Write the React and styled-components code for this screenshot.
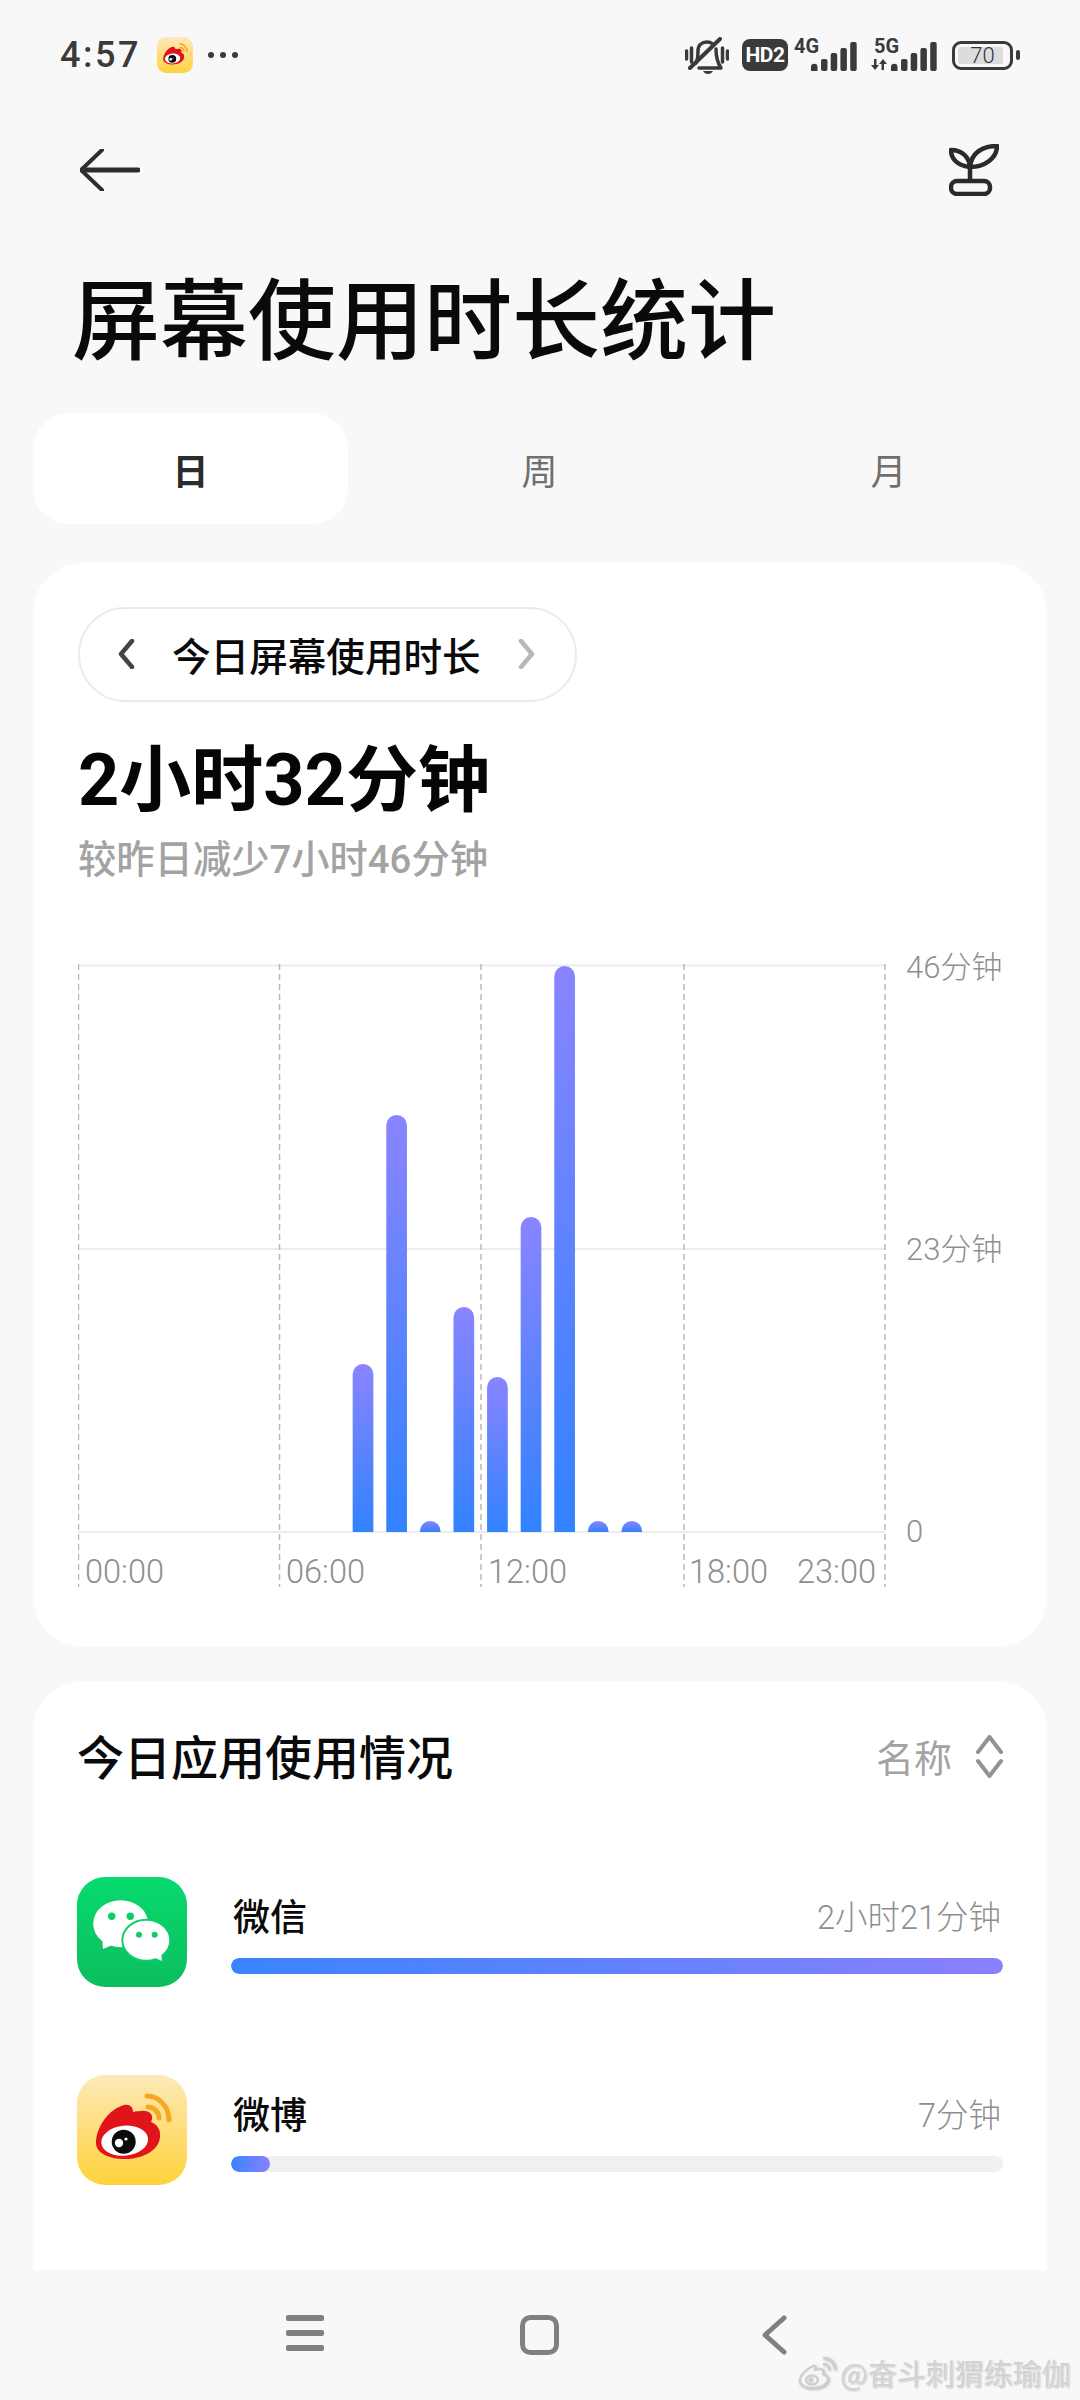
import React from "react";
import styled, { createGlobalStyle } from "styled-components";

const FONT = `Roboto, "Noto Sans CJK SC", sans-serif`;
const CJK = `"Noto Sans CJK SC", sans-serif`;
const GREY = "#a3a3a3";

const GlobalStyle = createGlobalStyle`
    html, body {
        margin: 0;
        padding: 0;
        background: #f8f8f8;
    }
    * {
        box-sizing: border-box;
    }
`;

const Page = styled.div`
    position: relative;
    width: 1080px;
    height: 2400px;
    overflow: hidden;
    display: flex;
    flex-direction: column;
    background: #f8f8f8;
    font-family: ${FONT};
`;

const StatusBar = styled.div`
    height: 110px;
    padding: 0 60px;
    display: flex;
    align-items: center;
    justify-content: space-between;
    color: #3a3a3a;
`;

const StatusLeft = styled.div`
    display: flex;
    align-items: center;
`;

const Clock = styled.span`
    font-size: 36px;
    font-weight: 500;
    letter-spacing: 2.5px;
    width: 97px;
`;

const Dots = styled.div`
    display: flex;
    gap: 6px;
    margin-left: 15px;
`;

const Dot = styled.i`
    width: 6px;
    height: 6px;
    border-radius: 50%;
    background: #3a3a3a;
`;

const StatusRight = styled.div`
    display: flex;
    align-items: center;
`;

const HdBadge = styled.div`
    width: 46px;
    height: 32px;
    margin: 0 6px 0 13px;
    border-radius: 8px;
    background: #3a3a3a;
    color: #fff;
    font-size: 21px;
    font-weight: 700;
    letter-spacing: -0.5px;
    display: flex;
    align-items: center;
    justify-content: center;
`;

const SignalGroup = styled.div`
    position: relative;
    width: ${(p) => p.$width}px;
    height: 32px;
    margin-right: ${(p) => p.$gap}px;
    display: flex;
    justify-content: flex-end;
    align-items: flex-end;
`;

const NetLabel = styled.span`
    position: absolute;
    left: ${(p) => p.$left}px;
    top: -3px;
    font-size: 20px;
    font-weight: 700;
    line-height: 20px;
`;

const DataArrows = styled.svg`
    position: absolute;
    left: 0;
    bottom: 1px;
`;

const Battery = styled.div`
    display: flex;
    align-items: center;
    gap: 3px;
`;

const BatteryBody = styled.div`
    position: relative;
    width: 61px;
    height: 29px;
    border: 3.5px solid #3a3a3a;
    border-radius: 9px;
    display: flex;
    align-items: center;
    justify-content: center;
    font-size: 22px;
    font-weight: 300;
    color: #333;

    &::before {
        content: "";
        position: absolute;
        left: 2.5px;
        top: 3px;
        bottom: 3px;
        width: 45px;
        background: #dcdcdc;
        border-radius: 2px;
    }

    span {
        position: relative;
    }
`;

const BatteryNub = styled.i`
    width: 4px;
    height: 10px;
    border-radius: 2px;
    background: #3a3a3a;
`;

const TopBar = styled.div`
    height: 120px;
    padding: 0 81px 0 80px;
    display: flex;
    align-items: center;
    justify-content: space-between;
`;

const Title = styled.h1`
    margin: 34px 0 0;
    padding-left: 72px;
    font-family: ${CJK};
    font-size: 88px;
    font-weight: 500;
    line-height: 100px;
    color: #0a0a0a;
`;

const Tabs = styled.div`
    margin-top: 49px;
    padding: 0 33px;
    display: flex;
    gap: 34px;
`;

const Tab = styled.div`
    width: 315px;
    height: 111px;
    border-radius: 36px;
    background: ${(p) => (p.$active ? "#fff" : "transparent")};
    color: ${(p) => (p.$active ? "#2b2b2b" : "#6f6f6f")};
    font-family: ${CJK};
    font-size: 36px;
    font-weight: ${(p) => (p.$active ? 700 : 400)};
    display: flex;
    align-items: center;
    justify-content: center;
`;

const Card = styled.section`
    margin: 39px 33px 0;
    height: 1084px;
    padding: 44px 45px 0;
    border-radius: 50px;
    background: #fff;
`;

const Pill = styled.div`
    width: 499px;
    height: 95px;
    padding: 0 0 2px 38px;
    border: 2px solid #ebebeb;
    border-radius: 48px;
    display: flex;
    align-items: center;
    gap: 37px;
    font-family: ${CJK};
    font-size: 38.6px;
    font-weight: 500;
    color: #0a0a0a;
    white-space: nowrap;
`;

const BigTime = styled.div`
    margin-top: 34px;
    font-size: 72px;
    font-weight: 700;
    line-height: 90px;
    color: #050505;
    font-family: ${FONT};
`;

const Compare = styled.div`
    margin-top: 9px;
    font-size: 38.3px;
    font-weight: 500;
    line-height: 50px;
    color: ${GREY};
`;

const ChartRow = styled.div`
    margin-top: 79px;
    display: flex;
    align-items: flex-start;
`;

const ChartSvg = styled.svg`
    display: block;
    flex: none;
`;

const AxisText = styled.text`
    font-family: ${FONT};
    font-size: 32.5px;
    font-weight: 300;
    fill: #8f8f8f;
`;

const YAxis = styled.div`
    margin: -16px 0 0 20px;
    height: 604px;
    display: flex;
    flex-direction: column;
    justify-content: space-between;
`;

const YLabel = styled.span`
    font-size: 31px;
    font-weight: 300;
    line-height: 40px;
    color: #8f8f8f;
    white-space: nowrap;
`;

const ListCard = styled.section`
    flex: 1;
    margin: 34px 33px 0;
    padding: 44px 44px 0;
    border-radius: 50px 50px 0 0;
    background: #fff;
`;

const ListHeader = styled.div`
    height: 60px;
    display: flex;
    align-items: center;
    justify-content: space-between;
`;

const ListTitle = styled.h2`
    margin: 0;
    font-family: ${CJK};
    font-size: 47px;
    font-weight: 500;
    line-height: 60px;
    color: #0a0a0a;
`;

const Sort = styled.div`
    display: flex;
    align-items: center;
    gap: 24px;
    font-family: ${CJK};
    font-size: 38px;
    color: ${GREY};

    svg {
        margin-top: 3px;
    }
`;

const AppList = styled.div`
    margin-top: 92px;
    display: flex;
    flex-direction: column;
    gap: 88px;
`;

const AppRow = styled.div`
    display: flex;
    gap: 44px;
`;

const AppInfo = styled.div`
    flex: 1;
    padding-top: 15px;
`;

const AppLine = styled.div`
    height: 50px;
    display: flex;
    align-items: center;
    justify-content: space-between;
`;

const AppName = styled.span`
    font-family: ${CJK};
    font-size: 37px;
    font-weight: 500;
    color: #0a0a0a;
    margin: -5px 0 0 2px;
`;

const AppTime = styled.span`
    font-size: 32.5px;
    font-weight: 300;
    color: #8f8f8f;
    margin: -5px 2px 0 0;
`;

const Track = styled.div`
    margin-top: 16px;
    height: 16px;
    border-radius: 8px;
    background: #f0f0f0;
    overflow: hidden;
`;

const Fill = styled.div`
    height: 100%;
    border-radius: 8px;
    background: linear-gradient(90deg, #3a84ff, #8a80ff);
`;

const NavBar = styled.nav`
    height: 130px;
    display: flex;
    align-items: flex-start;
    padding: 45px 0 0 286px;
    background: #f8f8f8;
`;

const NavItem = styled.div`
    display: flex;
    margin-left: ${(p) => p.$offset || 0}px;
`;

const Watermark = styled.div`
    position: absolute;
    left: 798px;
    top: 2354px;
    display: flex;
    align-items: center;
    gap: 3px;
    font-family: ${CJK};
    font-size: 29px;
    line-height: 36px;
    color: #d2d2d2;
    white-space: nowrap;
    text-shadow: 0 0 2px #fff, 1px 1px 2px rgba(0, 0, 0, 0.28);
`;

const LogoSvg = styled.svg`
    display: block;
    flex: none;
`;

const WatermarkSvg = styled.svg`
    flex: none;
    filter: drop-shadow(1px 1px 1px rgba(0, 0, 0, 0.25));
`;

const BARS = [
    [8, 168],
    [9, 417],
    [10, 11],
    [11, 225],
    [12, 155],
    [13, 315],
    [14, 566],
    [15, 11],
    [16, 11],
];
const GRID_X = [0.5, 201.5, 403, 606, 807];
const X_LABELS = [
    ["00:00", 7],
    ["06:00", 208],
    ["12:00", 410],
    ["18:00", 611],
    ["23:00", 719],
];

const APPS = [
    { name: "微信", time: "2小时21分钟", share: 100, Icon: () => <WeChatIcon /> },
    { name: "微博", time: "7分钟", share: 5, Icon: () => <WeiboIcon /> },
];

const barPath = (hour, h) => {
    const w = 20.7;
    const x = 0.5 + (hour + 0.16) * 33.6;
    const base = 568;
    const ry = Math.min(w / 2, h);
    return `M${x} ${base}V${base - h + ry}A${w / 2} ${ry} 0 0 1 ${x + w} ${base - h + ry}V${base}Z`;
};

const UsageChart = () => (
    <ChartSvg width="808" height="640" viewBox="0 0 808 640">
        <defs>
            <linearGradient id="bar" x1="0" y1="0" x2="0" y2="1">
                <stop offset="0" stopColor="#8a84ff" />
                <stop offset="1" stopColor="#3282ff" />
            </linearGradient>
        </defs>
        {[1.5, 285, 568].map((y) => (
            <line key={y} x1="0" x2="807" y1={y} y2={y} stroke="#ececec" strokeWidth="2" />
        ))}
        {GRID_X.map((x) => (
            <line key={x} x1={x} x2={x} y1="0" y2="623" stroke="#b8b8b8" strokeWidth="1.5" strokeDasharray="6 4" />
        ))}
        {BARS.map(([hour, h]) => (
            <path key={hour} d={barPath(hour, h)} fill="url(#bar)" />
        ))}
        {X_LABELS.map(([label, x]) => (
            <AxisText key={label} x={x} y="619">{label}</AxisText>
        ))}
    </ChartSvg>
);

const Signal = () => (
    <svg width="46" height="29" viewBox="0 0 46 29" fill="#3a3a3a">
        <path d="M0 29v-4a3 3 0 0 1 6.5 0v4z" />
        <rect x="10" y="17" width="6.5" height="12" rx="2" />
        <rect x="19.7" y="11" width="6.5" height="18" rx="2" />
        <rect x="29.4" y="6" width="6.5" height="23" rx="2" />
        <rect x="39.2" y="0" width="6.5" height="29" rx="2" />
    </svg>
);

const MutedBell = () => (
    <svg width="44" height="37" viewBox="0 0 44 37" fill="none" stroke="#3a3a3a" strokeWidth="3.5" strokeLinecap="round" strokeLinejoin="round">
        <path d="M1.500 14v8M6.500 11v14M37.500 11v14M42.500 14v8" />
        <path d="M11 26c2-4 2-7 2-12 0-6 4-9 9-9 2 0 4 .5 5 1.500" />
        <path d="M31 12c0 7 1 13 5 19H14" />
        <path d="M5 31 35 2" strokeWidth="4" />
        <path d="M18 34h10c-1 2-3 3-5 3s-4-1-5-3z" fill="#3a3a3a" stroke="none" />
    </svg>
);

const BackArrow = () => (
    <svg width="60" height="42" viewBox="0 0 60 42" fill="none" stroke="#2e2e2e" strokeLinecap="round" strokeLinejoin="round">
        <path d="M22 1 1 21l21 20" strokeWidth="4" />
        <path d="M2 21h56" strokeWidth="5" />
    </svg>
);

const Sprout = () => (
    <svg width="50" height="52" viewBox="0 0 50 52" fill="none" stroke="#2a2a2a" strokeWidth="4.5" strokeLinejoin="round">
        <path d="M21 23C10 22 2 16 2 6c10 0 18 6 19 17z" />
        <path d="M21 23C22 10 32 2 48 2c0 12-12 21-27 21z" />
        <path d="M21 23v14" />
        <rect x="2" y="37" width="39" height="13" rx="6" />
    </svg>
);

const PillChevron = ({ dir, color }) => (
    <svg width="17" height="30" viewBox="0 0 17 30" fill="none" stroke={color} strokeWidth="4.5" strokeLinecap="round" strokeLinejoin="round">
        <path d={dir === "left" ? "M14 2 3 15l11 13" : "M3 2l11 13L3 28"} />
    </svg>
);

const SortIcon = () => (
    <svg width="27" height="43" viewBox="0 0 27 43" fill="none" stroke="#939393" strokeWidth="4" strokeLinecap="round" strokeLinejoin="round">
        <path d="M2 17 13.500 2 25 17M2 26l11.500 15L25 26" />
    </svg>
);

function WeChatIcon() {
    return (
        <LogoSvg width="110" height="110" viewBox="0 0 110 110">
            <defs>
                <linearGradient id="wechat" x1="0" y1="0" x2="0" y2="1">
                    <stop offset="0" stopColor="#06da6e" />
                    <stop offset="1" stopColor="#0dbd5e" />
                </linearGradient>
            </defs>
            <rect width="110" height="110" rx="28" fill="url(#wechat)" />
            <ellipse cx="43.700" cy="46.700" rx="27.500" ry="23.500" fill="#fff" />
            <path d="M25 60 26 72 40 66z" fill="#fff" />
            <ellipse cx="69.300" cy="63.300" rx="24" ry="20.500" fill="#fff" stroke="#0bcf68" strokeWidth="2" />
            <path d="M76 80 85 84 84 74z" fill="#fff" />
            <circle cx="34.700" cy="39.300" r="3.700" fill="#0bcf68" />
            <circle cx="53.300" cy="39.300" r="3.700" fill="#0bcf68" />
            <circle cx="62" cy="57.700" r="3" fill="#0bcf68" />
            <circle cx="77.700" cy="57.700" r="3" fill="#0bcf68" />
        </LogoSvg>
    );
}

function WeiboIcon({ size = 110, id = "weibo" }) {
    return (
        <LogoSvg width={size} height={size} viewBox="0 0 110 110">
            <defs>
                <linearGradient id={id} x1="0" y1="0" x2="0" y2="1">
                    <stop offset="0" stopColor="#fde9ba" />
                    <stop offset="1" stopColor="#ffd23a" />
                </linearGradient>
            </defs>
            <rect width="110" height="110" rx="28" fill={`url(#${id})`} />
            <path
                d="M19 68C19 52 32 34 47 30c6-1 9 2 9 7 5-1 15-3 18 2 2 3 1 6 0 8 6 2 10 8 9 15-1 14-18 22-35 22-16 0-29-6-29-16z"
                fill="#e0141b"
            />
            <ellipse cx="47.700" cy="65.700" rx="23.500" ry="15" fill="#fff" transform="rotate(-6 47.700 65.700)" />
            <circle cx="46.700" cy="66.700" r="12" fill="#0b0b0b" />
            <circle cx="42" cy="68" r="4.200" fill="#fff" />
            <circle cx="49" cy="64" r="1.600" fill="#fff" />
            <path d="M70 21C82 21 92 32 92 45M71 32C77 32 82 37 82 43" fill="none" stroke="#f7a823" strokeWidth="5" strokeLinecap="round" />
        </LogoSvg>
    );
}

const WatermarkLogo = () => (
    <WatermarkSvg width="39" height="33" viewBox="0 0 39 33" fill="none" stroke="#cfcfcf" strokeWidth="2.500" strokeLinecap="round">
        <path d="M15 10C7 14 2 20 2 25c0 4 6 7 13 7 8 0 15-4 15-9 0-3-3-4-5-5 1-3 0-5-3-5-2 0-4 1-5 1 1-3 0-5-2-4z" fill="#f6f6f6" />
        <ellipse cx="14" cy="24" rx="6" ry="4.500" />
        <circle cx="13" cy="24" r="1.500" fill="#cfcfcf" />
        <path d="M26 2c6 0 11 5 11 11M26 8c3 0 5 2 5 5" />
    </WatermarkSvg>
);

const NavMenu = () => (
    <svg width="38" height="36" viewBox="0 0 38 36" fill="#808080">
        <rect width="38" height="6" rx="2" />
        <rect y="15" width="38" height="6" rx="2" />
        <rect y="30" width="38" height="6" rx="2" />
    </svg>
);

const NavHome = () => (
    <svg width="39" height="40" viewBox="0 0 39 40" fill="none" stroke="#808080" strokeWidth="5">
        <rect x="2.500" y="2.500" width="34" height="35" rx="8" />
    </svg>
);

const NavBack = () => (
    <svg width="25" height="40" viewBox="0 0 25 40" fill="none" stroke="#808080" strokeWidth="5" strokeLinecap="round" strokeLinejoin="round">
        <path d="M22 3 3 20l19 17" />
    </svg>
);

const App = () => (
    <Page>
        <GlobalStyle />
        <StatusBar>
            <StatusLeft>
                <Clock>4:57</Clock>
                <WeiboIcon size={36} id="weibo-mini" />
                <Dots>
                    <Dot />
                    <Dot />
                    <Dot />
                </Dots>
            </StatusLeft>
            <StatusRight>
                <MutedBell />
                <HdBadge>HD2</HdBadge>
                <SignalGroup $width={63} $gap={14}>
                    <NetLabel $left={0}>4G</NetLabel>
                    <Signal />
                </SignalGroup>
                <SignalGroup $width={66} $gap={15}>
                    <NetLabel $left={3}>5G</NetLabel>
                    <DataArrows width="16" height="11" viewBox="0 0 16 11" fill="#3a3a3a">
                        <path d="M3 0h2.500v6H8L4 11 0 6h3zM10.500 11H13V5h3l-4-5-4 5h2.500z" />
                    </DataArrows>
                    <Signal />
                </SignalGroup>
                <Battery>
                    <BatteryBody>
                        <span>70</span>
                    </BatteryBody>
                    <BatteryNub />
                </Battery>
            </StatusRight>
        </StatusBar>

        <TopBar>
            <BackArrow />
            <Sprout />
        </TopBar>

        <Title>屏幕使用时长统计</Title>

        <Tabs>
            <Tab $active>日</Tab>
            <Tab>周</Tab>
            <Tab>月</Tab>
        </Tabs>

        <Card>
            <Pill>
                <PillChevron dir="left" color="#444" />
                今日屏幕使用时长
                <PillChevron dir="right" color="#b8b8b8" />
            </Pill>
            <BigTime>2小时32分钟</BigTime>
            <Compare>较昨日减少7小时46分钟</Compare>
            <ChartRow>
                <UsageChart />
                <YAxis>
                    <YLabel>46分钟</YLabel>
                    <YLabel>23分钟</YLabel>
                    <YLabel>0</YLabel>
                </YAxis>
            </ChartRow>
        </Card>

        <ListCard>
            <ListHeader>
                <ListTitle>今日应用使用情况</ListTitle>
                <Sort>
                    名称
                    <SortIcon />
                </Sort>
            </ListHeader>
            <AppList>
                {APPS.map(({ name, time, share, Icon }) => (
                    <AppRow key={name}>
                        <Icon />
                        <AppInfo>
                            <AppLine>
                                <AppName>{name}</AppName>
                                <AppTime>{time}</AppTime>
                            </AppLine>
                            <Track>
                                <Fill style={{ width: `${share}%` }} />
                            </Track>
                        </AppInfo>
                    </AppRow>
                ))}
            </AppList>
        </ListCard>

        <NavBar>
            <NavItem>
                <NavMenu />
            </NavItem>
            <NavItem $offset={196}>
                <NavHome />
            </NavItem>
            <NavItem $offset={203}>
                <NavBack />
            </NavItem>
        </NavBar>

        <Watermark>
            <WatermarkLogo />
            @奋斗刺猬练瑜伽
        </Watermark>
    </Page>
);

export default App;
